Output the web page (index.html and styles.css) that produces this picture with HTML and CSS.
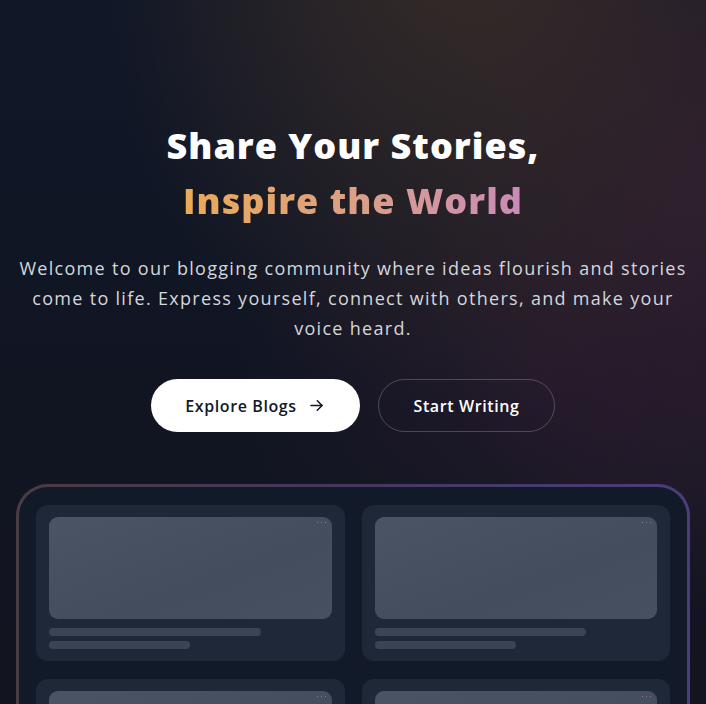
FILE: index.html
```html
<!DOCTYPE html>
<html lang="en">
<head>
<meta charset="utf-8">
<title>Share Your Stories</title>
<link rel="stylesheet" href="styles.css">
</head>
<body>
<section class="hero">
  <h1 class="title">Share Your Stories,<br><span class="accent">Inspire the World</span></h1>
  <p class="lead">Welcome to our blogging community where ideas flourish and stories come to life. Express yourself, connect with others, and make your voice heard.</p>
  <div class="actions">
    <a class="btn btn-primary" href="#">Explore Blogs
      <svg class="arrow" viewBox="0 0 24 24" width="19" height="19" fill="none" stroke="currentColor" stroke-width="2" stroke-linecap="round" stroke-linejoin="round"><path d="M5 12h14"/><path d="M13 6l6 6-6 6"/></svg>
    </a>
    <a class="btn btn-outline" href="#">Start Writing</a>
  </div>
  <div class="frame">
    <div class="frame-inner">
      <div class="card"><div class="thumb"><span class="dots"><i></i><i></i><i></i></span></div><div class="line l1"></div><div class="line l2"></div></div>
      <div class="card"><div class="thumb"><span class="dots"><i></i><i></i><i></i></span></div><div class="line l1"></div><div class="line l2"></div></div>
      <div class="card"><div class="thumb"><span class="dots"><i></i><i></i><i></i></span></div><div class="line l1"></div><div class="line l2"></div></div>
      <div class="card"><div class="thumb"><span class="dots"><i></i><i></i><i></i></span></div><div class="line l1"></div><div class="line l2"></div></div>
    </div>
  </div>
</section>
</body>
</html>
```
FILE: styles.css
```css
html, body {
  margin: 0;
  padding: 0;
  height: 100%;
}
body {
  background-color: #111827;
  background-image:
    radial-gradient(ellipse 360px 480px at 460px -60px, rgba(58, 45, 40, 0.9), rgba(58, 45, 40, 0.55) 45%, rgba(58, 45, 40, 0) 100%),
    radial-gradient(ellipse 300px 420px at 720px 200px, rgba(50, 31, 48, 0.9), rgba(50, 31, 48, 0) 100%),
    radial-gradient(ellipse 320px 260px at 560px 380px, rgba(40, 26, 44, 0.7), rgba(40, 26, 44, 0) 100%),
    linear-gradient(180deg, #101727 0%, #12141f 100%);
  font-family: "Open Sans", "Liberation Sans", sans-serif;
  color: #fff;
  overflow: hidden;
}
.hero {
  display: flex;
  flex-direction: column;
  align-items: center;
  padding-top: 118px;
  height: 704px;
  box-sizing: border-box;
  overflow: hidden;
}
.title {
  margin: 0;
  font-family: "Open Sans", sans-serif;
  font-weight: 800;
  font-size: 36px;
  line-height: 55px;
  letter-spacing: 1px;
  text-align: center;
  color: #ffffff;
}
.accent {
  background: linear-gradient(90deg, #ecaa55 0%, #dba086 50%, #c98bb8 100%);
  -webkit-background-clip: text;
  background-clip: text;
  color: transparent;
}
.lead {
  margin: 25px 0 0;
  width: 672px;
  font-size: 18px;
  line-height: 30px;
  letter-spacing: 1.3px;
  text-align: center;
  color: #d4d6dc;
}
.actions {
  display: flex;
  gap: 18px;
  margin-top: 36px;
}
.btn {
  display: flex;
  align-items: center;
  justify-content: center;
  height: 53px;
  box-sizing: border-box;
  border-radius: 27px;
  font-size: 16px;
  font-weight: 600;
  letter-spacing: 0.6px;
  text-decoration: none;
}
.btn-primary {
  width: 209px;
  background: #ffffff;
  color: #111827;
  gap: 10px;
}
.arrow { display: block; }
.btn-outline {
  width: 177px;
  border: 1.5px solid rgba(255, 255, 255, 0.22);
  color: #ffffff;
}
.frame {
  margin-top: 52px;
  width: 674px;
  flex-shrink: 0;
  box-sizing: border-box;
  padding: 3px;
  border-radius: 32px;
  background: linear-gradient(90deg, #4b3b42 0%, #45385f 50%, #4a3d7c 100%);
}
.frame-inner {
  background: #121a2a;
  border-radius: 29px;
  padding: 18px 17px 0;
  display: grid;
  grid-template-columns: 1fr 1fr;
  column-gap: 17px;
  row-gap: 18px;
  height: 260px;
  overflow: hidden;
}
.card {
  background: #1f2838;
  border-radius: 12px;
  padding: 12px 13px;
  height: 156px;
  box-sizing: border-box;
}
.thumb {
  position: relative;
  height: 102px;
  border-radius: 9px;
  background: linear-gradient(160deg, #4a5464 0%, #434d5d 60%, #465060 100%);
}
.dots {
  position: absolute;
  top: 5px;
  right: 6px;
  display: flex;
  gap: 3px;
}
.dots i {
  display: block;
  width: 1px;
  height: 1px;
  background: #8a7a8a;
}
.line {
  height: 8px;
  border-radius: 4px;
  background: #3a4455;
}
.l1 { margin-top: 9px; width: 75%; }
.l2 { margin-top: 5px; width: 50%; }
```
